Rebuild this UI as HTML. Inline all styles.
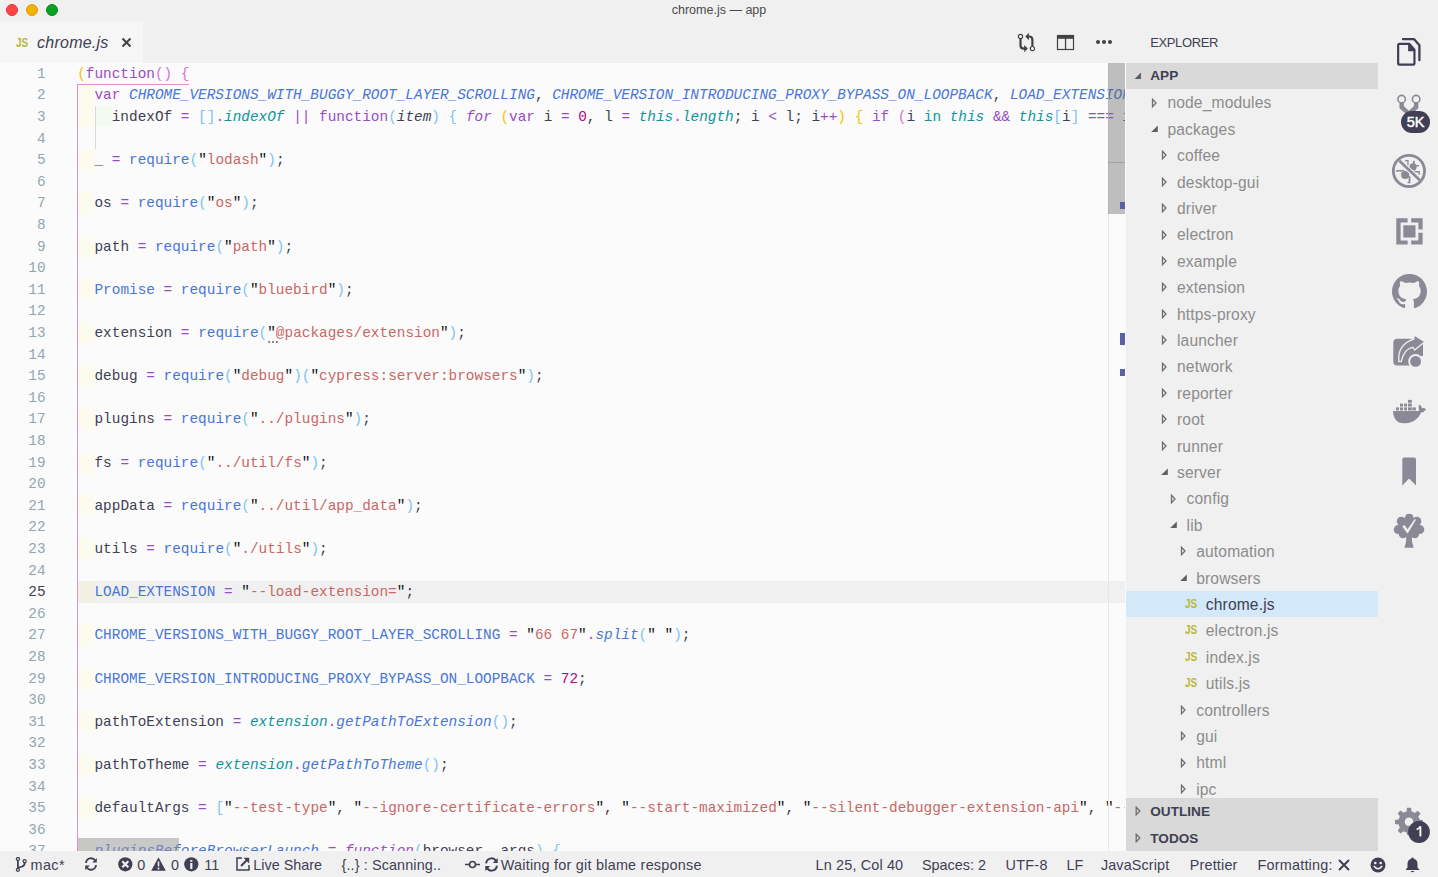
<!DOCTYPE html>
<html><head><meta charset="utf-8">
<style>
*{margin:0;padding:0;box-sizing:border-box}
html,body{width:1438px;height:877px;overflow:hidden;background:#f0f0f0;font-family:"Liberation Sans",sans-serif}
.abs{position:absolute}
#title{position:absolute;left:0;top:0;width:1438px;height:21px;background:#f0f0f0}
.tl{position:absolute;top:4px;width:12px;height:12px;border-radius:50%}
#ttext{position:absolute;left:0;width:1438px;top:3px;text-align:center;font-size:12.5px;color:#4c4c4c;line-height:14px}
#tabs{position:absolute;left:0;top:21px;width:1126px;height:41.7px;background:#f0f0f0}
#tab{position:absolute;left:0;top:0;width:143px;height:41.7px;background:#f6f6f6}
#tabjs{position:absolute;left:15.5px;top:14px;font-size:13px;line-height:15px;font-weight:bold;color:#b7b73b;transform:scaleX(0.77);transform-origin:0 0}
#tabname{position:absolute;left:37px;top:12.5px;font-size:16px;font-style:italic;color:#403f53;letter-spacing:0.25px}
#editor{position:absolute;left:0;top:62.7px;width:1126px;height:788px;background:#fbfbfb;overflow:hidden}
#code{position:absolute;left:0;top:-62.7px;width:1125px;height:877px;overflow:hidden}
.ln{position:absolute;left:0;width:45.6px;text-align:right;font-family:"Liberation Mono",monospace;font-size:14.4px;line-height:21.6px;height:21.6px;color:#90a7b2;padding-top:1px}
.ln.act{color:#403f53}
.cl{position:absolute;left:77.2px;white-space:pre;font-family:"Liberation Mono",monospace;font-size:14.4px;line-height:21.6px;height:21.6px;color:#403f53;padding-top:1px}
.ir1{position:absolute;left:78px;width:15.8px;height:21.6px;background:#fbfbee}
.ir2{position:absolute;left:95px;width:17.3px;height:21.6px;background:#f2fbf2}
.k{color:#994cc3}.ki{color:#994cc3;font-style:italic}
.c{color:#4876d6;font-style:italic}
.f{color:#4876d6}.fi{color:#4876d6;font-style:italic}
.t{color:#0c969b;font-style:italic}.tn{color:#0c969b}
.s{color:#c96765}.q{color:#111111}
.n{color:#aa0982}.o{color:#994cc3}.v{color:#403f53}.vi{color:#403f53;font-style:italic}
.b1{color:#f2c500}.b2{color:#da70d6}.b3{color:#7cc4f2}
#sidebar{position:absolute;left:1126px;top:21px;width:252px;height:830px;background:#f0f0f0;overflow:hidden}
#activity{position:absolute;left:1378px;top:21px;width:60px;height:830px;background:#f0f0f0}
.tr{position:absolute;left:1126px;width:252px;height:26.4px}
.tr.sel{background:#d3e8f8}
.tw{position:absolute;top:8.2px}
.tt{position:absolute;top:5px;font-size:15.6px;line-height:18px;color:#8c8c8c;white-space:nowrap;letter-spacing:0.15px}
.tr.sel .tt{color:#403f53}
.jsi{position:absolute;top:5px;font-size:13px;line-height:15px;font-weight:bold;color:#b7b73b;transform:scaleX(0.77);transform-origin:0 0}
#status{position:absolute;left:0;top:850.7px;width:1438px;height:26.3px;background:#f0f0f0;color:#403f53;font-size:14.4px}
.st{position:absolute;top:6px;white-space:nowrap;line-height:16px}
</style></head><body>
<div id="title">
  <div class="tl" style="left:6px;background:#fd4444;border:0.6px solid #e53535"></div>
  <div class="tl" style="left:26px;background:#f6b000;border:0.6px solid #e0a000"></div>
  <div class="tl" style="left:46px;background:#08a222;border:0.6px solid #06901c"></div>
  <div id="ttext">chrome.js — app</div>
</div>
<div id="tabs">
  <div id="tab">
    <span id="tabjs">JS</span>
    <span id="tabname">chrome.js</span>
    <svg class="abs" style="left:121px;top:16px" width="11" height="11" viewBox="0 0 11 11"><path d="M1.5 1.5 L9.5 9.5 M9.5 1.5 L1.5 9.5" stroke="#424242" stroke-width="2"/></svg>
  </div>
  <!-- editor actions -->
  <svg class="abs" style="left:1016px;top:10px" width="22" height="22" viewBox="0 0 22 22">
    <path d="M4.5 7.6 V14.2 Q4.5 17.6 7.9 17.6 H9" fill="none" stroke="#424242" stroke-width="2.2"/>
    <path d="M8.2 13.9 L11.8 17.6 L8.2 21.3 Z" fill="#424242"/>
    <path d="M16.4 15.5 V8.9 Q16.4 5.5 13 5.5 H11.9" fill="none" stroke="#424242" stroke-width="2.2"/>
    <path d="M12.9 1.8 L9.3 5.5 L12.9 9.2 Z" fill="#424242"/>
    <circle cx="4.5" cy="5.5" r="2.1" fill="#fff" stroke="#424242" stroke-width="1.2"/>
    <circle cx="16.4" cy="17.6" r="2.1" fill="#fff" stroke="#424242" stroke-width="1.2"/>
  </svg>
  <svg class="abs" style="left:1056px;top:13px" width="19" height="17" viewBox="0 0 19 17">
    <rect x="1.5" y="1.5" width="16" height="14" fill="none" stroke="#424242" stroke-width="1.2"/>
    <rect x="1" y="1" width="17" height="3.8" fill="#424242"/>
    <rect x="8.9" y="1" width="1.3" height="15" fill="#424242"/>
  </svg>
  <svg class="abs" style="left:1094px;top:37px;top:16px" width="20" height="10" viewBox="0 0 20 10">
    <circle cx="4" cy="5" r="2" fill="#424242"/><circle cx="10" cy="5" r="2" fill="#424242"/><circle cx="16" cy="5" r="2" fill="#424242"/>
  </svg>
</div>

<div id="editor">
 <div id="code">
<div class="ir1" style="top:84.30px"></div>
<div class="ir1" style="top:105.90px"></div>
<div class="ir1" style="top:149.10px"></div>
<div class="ir1" style="top:192.30px"></div>
<div class="ir1" style="top:235.50px"></div>
<div class="ir1" style="top:278.70px"></div>
<div class="ir1" style="top:321.90px"></div>
<div class="ir1" style="top:365.10px"></div>
<div class="ir1" style="top:408.30px"></div>
<div class="ir1" style="top:451.50px"></div>
<div class="ir1" style="top:494.70px"></div>
<div class="ir1" style="top:537.90px"></div>
<div class="ir1" style="top:581.10px"></div>
<div class="ir1" style="top:624.30px"></div>
<div class="ir1" style="top:667.50px"></div>
<div class="ir1" style="top:710.70px"></div>
<div class="ir1" style="top:753.90px"></div>
<div class="ir1" style="top:797.10px"></div>
<div class="ir1" style="top:840.30px"></div>
<div class="ir2" style="top:105.90px"></div>
  <div class="abs" style="left:78px;top:581.1px;width:1047px;height:21.6px;background:#f0f0f0"></div>
  <div class="abs" style="left:78px;top:581.1px;width:15.8px;height:21.6px;background:#f0f0e3"></div>
  <div class="abs" style="left:94.6px;top:106.3px;width:1px;height:43.2px;background:#d9d9d9"></div>
  <div class="abs" style="left:77px;top:84.3px;width:1.1px;height:800px;background:#dd90da"></div>
  <div class="abs" style="left:77px;top:84px;width:111.5px;height:1.1px;background:#dd90da"></div>
<div class="ln" style="top:62.70px">1</div>
<div class="cl" style="top:62.70px"><span class="b1">(</span><span class="k">function</span><span class="b2">()</span><span class="v"> </span><span class="b2">{</span></div>
<div class="ln" style="top:84.30px">2</div>
<div class="cl" style="top:84.30px"><span class="v">  </span><span class="k">var </span><span class="c">CHROME_VERSIONS_WITH_BUGGY_ROOT_LAYER_SCROLLING</span><span class="v">, </span><span class="c">CHROME_VERSION_INTRODUCING_PROXY_BYPASS_ON_LOOPBACK</span><span class="v">, </span><span class="c">LOAD_EXTENSION</span><span class="v">, </span><span class="c">_, </span></div>
<div class="ln" style="top:105.90px">3</div>
<div class="cl" style="top:105.90px"><span class="v">    indexOf </span><span class="o">=</span><span class="v"> </span><span class="b3">[]</span><span class="o">.</span><span class="t">indexOf</span><span class="v"> </span><span class="o">||</span><span class="v"> </span><span class="k">function</span><span class="b3">(</span><span class="vi">item</span><span class="b3">)</span><span class="v"> </span><span class="b3">{</span><span class="v"> </span><span class="ki">for</span><span class="v"> </span><span class="b1">(</span><span class="k">var</span><span class="v"> i </span><span class="o">=</span><span class="v"> </span><span class="n">0</span><span class="v">, l </span><span class="o">=</span><span class="v"> </span><span class="t">this</span><span class="o">.</span><span class="t">length</span><span class="v">; i </span><span class="o">&lt;</span><span class="v"> l; i</span><span class="o">++</span><span class="b1">)</span><span class="v"> </span><span class="b1">{</span><span class="v"> </span><span class="k">if</span><span class="v"> </span><span class="b2">(</span><span class="v">i </span><span class="tn">in</span><span class="v"> </span><span class="t">this</span><span class="v"> </span><span class="o">&amp;&amp;</span><span class="v"> </span><span class="t">this</span><span class="b3">[</span><span class="v">i</span><span class="b3">]</span><span class="v"> </span><span class="o">===</span><span class="v"> item</span></div>
<div class="ln" style="top:127.50px">4</div>
<div class="ln" style="top:149.10px">5</div>
<div class="cl" style="top:149.10px"><span class="v">  </span><span class="v">_</span><span class="v"> </span><span class="o">=</span><span class="v"> </span><span class="f">require</span><span class="b3">(</span><span class="q">&quot;</span><span class="s">lodash</span><span class="q">&quot;</span><span class="b3">)</span><span class="v">;</span></div>
<div class="ln" style="top:170.70px">6</div>
<div class="ln" style="top:192.30px">7</div>
<div class="cl" style="top:192.30px"><span class="v">  </span><span class="v">os</span><span class="v"> </span><span class="o">=</span><span class="v"> </span><span class="f">require</span><span class="b3">(</span><span class="q">&quot;</span><span class="s">os</span><span class="q">&quot;</span><span class="b3">)</span><span class="v">;</span></div>
<div class="ln" style="top:213.90px">8</div>
<div class="ln" style="top:235.50px">9</div>
<div class="cl" style="top:235.50px"><span class="v">  </span><span class="v">path</span><span class="v"> </span><span class="o">=</span><span class="v"> </span><span class="f">require</span><span class="b3">(</span><span class="q">&quot;</span><span class="s">path</span><span class="q">&quot;</span><span class="b3">)</span><span class="v">;</span></div>
<div class="ln" style="top:257.10px">10</div>
<div class="ln" style="top:278.70px">11</div>
<div class="cl" style="top:278.70px"><span class="v">  </span><span class="f">Promise</span><span class="v"> </span><span class="o">=</span><span class="v"> </span><span class="f">require</span><span class="b3">(</span><span class="q">&quot;</span><span class="s">bluebird</span><span class="q">&quot;</span><span class="b3">)</span><span class="v">;</span></div>
<div class="ln" style="top:300.30px">12</div>
<div class="ln" style="top:321.90px">13</div>
<div class="cl" style="top:321.90px"><span class="v">  </span><span class="v">extension</span><span class="v"> </span><span class="o">=</span><span class="v"> </span><span class="f">require</span><span class="b3">(</span><span class="q">&quot;</span><span class="s">@packages/extension</span><span class="q">&quot;</span><span class="b3">)</span><span class="v">;</span></div>
<div class="ln" style="top:343.50px">14</div>
<div class="ln" style="top:365.10px">15</div>
<div class="cl" style="top:365.10px"><span class="v">  debug </span><span class="o">=</span><span class="v"> </span><span class="f">require</span><span class="b3">(</span><span class="q">&quot;</span><span class="s">debug</span><span class="q">&quot;</span><span class="b3">)(</span><span class="q">&quot;</span><span class="s">cypress:server:browsers</span><span class="q">&quot;</span><span class="b3">)</span><span class="v">;</span></div>
<div class="ln" style="top:386.70px">16</div>
<div class="ln" style="top:408.30px">17</div>
<div class="cl" style="top:408.30px"><span class="v">  </span><span class="v">plugins</span><span class="v"> </span><span class="o">=</span><span class="v"> </span><span class="f">require</span><span class="b3">(</span><span class="q">&quot;</span><span class="s">../plugins</span><span class="q">&quot;</span><span class="b3">)</span><span class="v">;</span></div>
<div class="ln" style="top:429.90px">18</div>
<div class="ln" style="top:451.50px">19</div>
<div class="cl" style="top:451.50px"><span class="v">  </span><span class="v">fs</span><span class="v"> </span><span class="o">=</span><span class="v"> </span><span class="f">require</span><span class="b3">(</span><span class="q">&quot;</span><span class="s">../util/fs</span><span class="q">&quot;</span><span class="b3">)</span><span class="v">;</span></div>
<div class="ln" style="top:473.10px">20</div>
<div class="ln" style="top:494.70px">21</div>
<div class="cl" style="top:494.70px"><span class="v">  </span><span class="v">appData</span><span class="v"> </span><span class="o">=</span><span class="v"> </span><span class="f">require</span><span class="b3">(</span><span class="q">&quot;</span><span class="s">../util/app_data</span><span class="q">&quot;</span><span class="b3">)</span><span class="v">;</span></div>
<div class="ln" style="top:516.30px">22</div>
<div class="ln" style="top:537.90px">23</div>
<div class="cl" style="top:537.90px"><span class="v">  </span><span class="v">utils</span><span class="v"> </span><span class="o">=</span><span class="v"> </span><span class="f">require</span><span class="b3">(</span><span class="q">&quot;</span><span class="s">./utils</span><span class="q">&quot;</span><span class="b3">)</span><span class="v">;</span></div>
<div class="ln" style="top:559.50px">24</div>
<div class="ln act" style="top:581.10px">25</div>
<div class="cl" style="top:581.10px"><span class="v">  </span><span class="f">LOAD_EXTENSION</span><span class="v"> </span><span class="o">=</span><span class="v"> </span><span class="q">&quot;</span><span class="s">--load-extension=</span><span class="q">&quot;</span><span class="v">;</span></div>
<div class="ln" style="top:602.70px">26</div>
<div class="ln" style="top:624.30px">27</div>
<div class="cl" style="top:624.30px"><span class="v">  </span><span class="f">CHROME_VERSIONS_WITH_BUGGY_ROOT_LAYER_SCROLLING</span><span class="v"> </span><span class="o">=</span><span class="v"> </span><span class="q">&quot;</span><span class="s">66 67</span><span class="q">&quot;</span><span class="o">.</span><span class="fi">split</span><span class="b3">(</span><span class="q">&quot; &quot;</span><span class="b3">)</span><span class="v">;</span></div>
<div class="ln" style="top:645.90px">28</div>
<div class="ln" style="top:667.50px">29</div>
<div class="cl" style="top:667.50px"><span class="v">  </span><span class="f">CHROME_VERSION_INTRODUCING_PROXY_BYPASS_ON_LOOPBACK</span><span class="v"> </span><span class="o">=</span><span class="v"> </span><span class="n">72</span><span class="v">;</span></div>
<div class="ln" style="top:689.10px">30</div>
<div class="ln" style="top:710.70px">31</div>
<div class="cl" style="top:710.70px"><span class="v">  pathToExtension </span><span class="o">=</span><span class="v"> </span><span class="t">extension</span><span class="o">.</span><span class="fi">getPathToExtension</span><span class="b3">()</span><span class="v">;</span></div>
<div class="ln" style="top:732.30px">32</div>
<div class="ln" style="top:753.90px">33</div>
<div class="cl" style="top:753.90px"><span class="v">  pathToTheme </span><span class="o">=</span><span class="v"> </span><span class="t">extension</span><span class="o">.</span><span class="fi">getPathToTheme</span><span class="b3">()</span><span class="v">;</span></div>
<div class="ln" style="top:775.50px">34</div>
<div class="ln" style="top:797.10px">35</div>
<div class="cl" style="top:797.10px"><span class="v">  defaultArgs </span><span class="o">=</span><span class="v"> </span><span class="b3">[</span><span class="q">&quot;</span><span class="s">--test-type</span><span class="q">&quot;</span><span class="v">, </span><span class="q">&quot;</span><span class="s">--ignore-certificate-errors</span><span class="q">&quot;</span><span class="v">, </span><span class="q">&quot;</span><span class="s">--start-maximized</span><span class="q">&quot;</span><span class="v">, </span><span class="q">&quot;</span><span class="s">--silent-debugger-extension-api</span><span class="q">&quot;</span><span class="v">, </span><span class="q">&quot;</span><span class="s">--no-default-browser-check</span></div>
<div class="ln" style="top:818.70px">36</div>
<div class="ln" style="top:840.30px">37</div>
<div class="cl" style="top:840.30px"><span class="v">  </span><span class="fi">pluginsBeforeBrowserLaunch</span><span class="v"> </span><span class="o">=</span><span class="v"> </span><span class="ki">function</span><span class="b3">(</span><span class="v">browser, args</span><span class="b3">)</span><span class="v"> </span><span class="b3">{</span></div>
  <div class="abs" style="left:78px;top:838px;width:100.5px;height:14px;background:rgba(150,150,150,0.5)"></div>
  <svg class="abs" style="left:266.5px;top:339.5px" width="14" height="4" viewBox="0 0 14 4"><circle cx="2.2" cy="2" r="1" fill="#666"/><circle cx="6" cy="2" r="1" fill="#666"/><circle cx="9.8" cy="2" r="1" fill="#666"/></svg>
 </div>
 <!-- overview ruler -->
 <div class="abs" style="left:1108px;top:0;width:1px;height:788px;background:#e6e6e6"></div>
 <div class="abs" style="left:1108px;top:0;width:17px;height:151px;background:rgba(100,100,100,0.4)"></div>
 <div class="abs" style="left:1108px;top:99px;width:17px;height:1.5px;background:#9aa3ab"></div>
 <div class="abs" style="left:1119.7px;top:139.5px;width:5.3px;height:7px;background:#5b5fa8"></div>
 <div class="abs" style="left:1119.7px;top:270.7px;width:5.3px;height:11.6px;background:#5b5fa8"></div>
 <div class="abs" style="left:1119.7px;top:305.9px;width:5.3px;height:7.4px;background:#5b5fa8"></div>
</div>

<div id="sidebar">
  <div class="abs" style="left:24.3px;top:14px;font-size:13px;color:#403f53;letter-spacing:-0.4px;line-height:16px">EXPLORER</div>
  <div class="abs" style="left:0;top:42px;width:252px;height:26.4px;background:#d9d9d9"></div>
  <svg class="abs" style="left:8px;top:50.5px" width="8" height="8" viewBox="0 0 8 8"><path d="M7 0.5 V7 H0.5 Z" fill="#5f5f5f"/></svg>
  <div class="abs" style="left:24.3px;top:47px;font-size:13.6px;font-weight:bold;color:#403f53;line-height:16px">APP</div>
  <div class="abs" style="left:0;top:777.3px;width:252px;height:52.7px;background:#d9d9d9"></div>
  <svg class="abs" style="left:9px;top:785px" width="8" height="10" viewBox="0 0 8 10"><path d="M1.2 1.2 L4.9 5 L1.2 8.8 Z" fill="none" stroke="#6f6f6f" stroke-width="1.3"/></svg>
  <div class="abs" style="left:24.3px;top:782.8px;font-size:13.6px;font-weight:bold;color:#403f53;line-height:16px">OUTLINE</div>
  <svg class="abs" style="left:9px;top:812px" width="8" height="10" viewBox="0 0 8 10"><path d="M1.2 1.2 L4.9 5 L1.2 8.8 Z" fill="none" stroke="#6f6f6f" stroke-width="1.3"/></svg>
  <div class="abs" style="left:24.3px;top:809.8px;font-size:13.6px;font-weight:bold;color:#403f53;line-height:16px">TODOS</div>
</div>
<div id="treewrap" style="position:absolute;left:0;top:0;width:1438px;height:798.3px;overflow:hidden">
<div class="tr" style="top:89.40px"><svg class="tw" style="left:25.0px" width="8" height="10" viewBox="0 0 8 10"><path d="M1.5 1.3 L5 5 L1.5 8.7 Z" fill="none" stroke="#6f6f6f" stroke-width="1.3"/></svg><span class="tt" style="left:41.4px">node_modules</span></div>
<div class="tr" style="top:115.80px"><svg class="tw" style="left:25.0px" width="8" height="10" viewBox="0 0 8 10"><path d="M6.8 1.4 L6.8 8 L0.2 8 Z" fill="#606060"/></svg><span class="tt" style="left:41.4px">packages</span></div>
<div class="tr" style="top:142.20px"><svg class="tw" style="left:34.6px" width="8" height="10" viewBox="0 0 8 10"><path d="M1.5 1.3 L5 5 L1.5 8.7 Z" fill="none" stroke="#6f6f6f" stroke-width="1.3"/></svg><span class="tt" style="left:51.0px">coffee</span></div>
<div class="tr" style="top:168.60px"><svg class="tw" style="left:34.6px" width="8" height="10" viewBox="0 0 8 10"><path d="M1.5 1.3 L5 5 L1.5 8.7 Z" fill="none" stroke="#6f6f6f" stroke-width="1.3"/></svg><span class="tt" style="left:51.0px">desktop-gui</span></div>
<div class="tr" style="top:195.00px"><svg class="tw" style="left:34.6px" width="8" height="10" viewBox="0 0 8 10"><path d="M1.5 1.3 L5 5 L1.5 8.7 Z" fill="none" stroke="#6f6f6f" stroke-width="1.3"/></svg><span class="tt" style="left:51.0px">driver</span></div>
<div class="tr" style="top:221.40px"><svg class="tw" style="left:34.6px" width="8" height="10" viewBox="0 0 8 10"><path d="M1.5 1.3 L5 5 L1.5 8.7 Z" fill="none" stroke="#6f6f6f" stroke-width="1.3"/></svg><span class="tt" style="left:51.0px">electron</span></div>
<div class="tr" style="top:247.80px"><svg class="tw" style="left:34.6px" width="8" height="10" viewBox="0 0 8 10"><path d="M1.5 1.3 L5 5 L1.5 8.7 Z" fill="none" stroke="#6f6f6f" stroke-width="1.3"/></svg><span class="tt" style="left:51.0px">example</span></div>
<div class="tr" style="top:274.20px"><svg class="tw" style="left:34.6px" width="8" height="10" viewBox="0 0 8 10"><path d="M1.5 1.3 L5 5 L1.5 8.7 Z" fill="none" stroke="#6f6f6f" stroke-width="1.3"/></svg><span class="tt" style="left:51.0px">extension</span></div>
<div class="tr" style="top:300.60px"><svg class="tw" style="left:34.6px" width="8" height="10" viewBox="0 0 8 10"><path d="M1.5 1.3 L5 5 L1.5 8.7 Z" fill="none" stroke="#6f6f6f" stroke-width="1.3"/></svg><span class="tt" style="left:51.0px">https-proxy</span></div>
<div class="tr" style="top:327.00px"><svg class="tw" style="left:34.6px" width="8" height="10" viewBox="0 0 8 10"><path d="M1.5 1.3 L5 5 L1.5 8.7 Z" fill="none" stroke="#6f6f6f" stroke-width="1.3"/></svg><span class="tt" style="left:51.0px">launcher</span></div>
<div class="tr" style="top:353.40px"><svg class="tw" style="left:34.6px" width="8" height="10" viewBox="0 0 8 10"><path d="M1.5 1.3 L5 5 L1.5 8.7 Z" fill="none" stroke="#6f6f6f" stroke-width="1.3"/></svg><span class="tt" style="left:51.0px">network</span></div>
<div class="tr" style="top:379.80px"><svg class="tw" style="left:34.6px" width="8" height="10" viewBox="0 0 8 10"><path d="M1.5 1.3 L5 5 L1.5 8.7 Z" fill="none" stroke="#6f6f6f" stroke-width="1.3"/></svg><span class="tt" style="left:51.0px">reporter</span></div>
<div class="tr" style="top:406.20px"><svg class="tw" style="left:34.6px" width="8" height="10" viewBox="0 0 8 10"><path d="M1.5 1.3 L5 5 L1.5 8.7 Z" fill="none" stroke="#6f6f6f" stroke-width="1.3"/></svg><span class="tt" style="left:51.0px">root</span></div>
<div class="tr" style="top:432.60px"><svg class="tw" style="left:34.6px" width="8" height="10" viewBox="0 0 8 10"><path d="M1.5 1.3 L5 5 L1.5 8.7 Z" fill="none" stroke="#6f6f6f" stroke-width="1.3"/></svg><span class="tt" style="left:51.0px">runner</span></div>
<div class="tr" style="top:459.00px"><svg class="tw" style="left:34.6px" width="8" height="10" viewBox="0 0 8 10"><path d="M6.8 1.4 L6.8 8 L0.2 8 Z" fill="#606060"/></svg><span class="tt" style="left:51.0px">server</span></div>
<div class="tr" style="top:485.40px"><svg class="tw" style="left:44.2px" width="8" height="10" viewBox="0 0 8 10"><path d="M1.5 1.3 L5 5 L1.5 8.7 Z" fill="none" stroke="#6f6f6f" stroke-width="1.3"/></svg><span class="tt" style="left:60.6px">config</span></div>
<div class="tr" style="top:511.80px"><svg class="tw" style="left:44.2px" width="8" height="10" viewBox="0 0 8 10"><path d="M6.8 1.4 L6.8 8 L0.2 8 Z" fill="#606060"/></svg><span class="tt" style="left:60.6px">lib</span></div>
<div class="tr" style="top:538.20px"><svg class="tw" style="left:53.8px" width="8" height="10" viewBox="0 0 8 10"><path d="M1.5 1.3 L5 5 L1.5 8.7 Z" fill="none" stroke="#6f6f6f" stroke-width="1.3"/></svg><span class="tt" style="left:70.2px">automation</span></div>
<div class="tr" style="top:564.60px"><svg class="tw" style="left:53.8px" width="8" height="10" viewBox="0 0 8 10"><path d="M6.8 1.4 L6.8 8 L0.2 8 Z" fill="#606060"/></svg><span class="tt" style="left:70.2px">browsers</span></div>
<div class="tr sel" style="top:591.00px"><span class="jsi" style="left:58.5px">JS</span><span class="tt" style="left:79.8px">chrome.js</span></div>
<div class="tr" style="top:617.40px"><span class="jsi" style="left:58.5px">JS</span><span class="tt" style="left:79.8px">electron.js</span></div>
<div class="tr" style="top:643.80px"><span class="jsi" style="left:58.5px">JS</span><span class="tt" style="left:79.8px">index.js</span></div>
<div class="tr" style="top:670.20px"><span class="jsi" style="left:58.5px">JS</span><span class="tt" style="left:79.8px">utils.js</span></div>
<div class="tr" style="top:696.60px"><svg class="tw" style="left:53.8px" width="8" height="10" viewBox="0 0 8 10"><path d="M1.5 1.3 L5 5 L1.5 8.7 Z" fill="none" stroke="#6f6f6f" stroke-width="1.3"/></svg><span class="tt" style="left:70.2px">controllers</span></div>
<div class="tr" style="top:723.00px"><svg class="tw" style="left:53.8px" width="8" height="10" viewBox="0 0 8 10"><path d="M1.5 1.3 L5 5 L1.5 8.7 Z" fill="none" stroke="#6f6f6f" stroke-width="1.3"/></svg><span class="tt" style="left:70.2px">gui</span></div>
<div class="tr" style="top:749.40px"><svg class="tw" style="left:53.8px" width="8" height="10" viewBox="0 0 8 10"><path d="M1.5 1.3 L5 5 L1.5 8.7 Z" fill="none" stroke="#6f6f6f" stroke-width="1.3"/></svg><span class="tt" style="left:70.2px">html</span></div>
<div class="tr" style="top:775.80px"><svg class="tw" style="left:53.8px" width="8" height="10" viewBox="0 0 8 10"><path d="M1.5 1.3 L5 5 L1.5 8.7 Z" fill="none" stroke="#6f6f6f" stroke-width="1.3"/></svg><span class="tt" style="left:70.2px">ipc</span></div>
</div>

<div id="activity">
  <!-- files -->
  <svg class="abs" style="left:17px;top:14.5px" width="27" height="31" viewBox="0 0 27 31">
    <path d="M8 3.2 H19.2 L24.4 9.2 V24" fill="none" stroke="#f0f0f0" stroke-width="4.2" stroke-linejoin="round"/>
    <path d="M8 3.2 H19.2 L24.4 9.2 V24.2" fill="none" stroke="#403f53" stroke-width="2.3" stroke-linejoin="round" stroke-linecap="round"/>
    <path d="M4.4 7.85 H14.2 L19.45 13.8 V27.4 Q19.45 28.65 18.2 28.65 H4.4 Q3.15 28.65 3.15 27.4 V9.1 Q3.15 7.85 4.4 7.85 Z" fill="#f0f0f0" stroke="#f0f0f0" stroke-width="3.6" stroke-linejoin="round"/>
    <path d="M4.4 7.85 H14.2 L19.45 13.8 V27.4 Q19.45 28.65 18.2 28.65 H4.4 Q3.15 28.65 3.15 27.4 V9.1 Q3.15 7.85 4.4 7.85 Z" fill="none" stroke="#403f53" stroke-width="2.2" stroke-linejoin="round"/>
    <path d="M13.1 7.85 H14.2 L19.45 13.8 V15.2 H13.1 Z" fill="#403f53"/>
  </svg>
  <!-- scm -->
  <svg class="abs" style="left:19px;top:69.5px" width="24" height="24" viewBox="0 0 24 24">
    <path d="M4.65 11.5 V16.2 L11 21.8 M19.1 11.5 V16.2 L12.8 21.8" fill="none" stroke="#8a8996" stroke-width="4.4"/>
    <circle cx="4.65" cy="8.15" r="3.75" fill="#f0f0f0" stroke="#8a8996" stroke-width="1.6"/>
    <circle cx="19.1" cy="8.15" r="3.75" fill="#f0f0f0" stroke="#8a8996" stroke-width="1.6"/>
  </svg>
  <div class="abs" style="left:23px;top:90px;width:29px;height:22px;border-radius:11px;background:#403f53;color:#fff;font-size:14.5px;line-height:22px;text-align:center;letter-spacing:-0.1px;-webkit-text-stroke:0.45px #fff">5K</div>
  <!-- debug -->
  <svg class="abs" style="left:12px;top:131px" width="38" height="38" viewBox="0 0 38 38">
    <g fill="#8a8996">
      <circle cx="15.2" cy="23" r="4.1"/>
      <circle cx="23" cy="14.9" r="3.6"/>
      <path d="M15 8 H18.6 V13 H17.3 V9.2 H15 Z"/>
      <rect x="23" y="8.9" width="1.7" height="4.5"/>
      <rect x="25.3" y="13" width="3.5" height="1.5"/>
      <path d="M24.3 19 H29.9 V22.7 H28.5 V20.6 H24.3 Z"/>
      <path d="M6.3 18 H14.3 V19.4 H7.6 V20 H6.3 Z"/>
      <path d="M18.6 24.3 H20.4 V31.2 H17.6 V30.1 H18.6 Z"/>
    </g>
    <path d="M9.3 8.7 L29.9 28.2" stroke="#f0f0f0" stroke-width="5"/>
    <path d="M9.3 8.7 L29.9 28.2" stroke="#8a8996" stroke-width="2.7"/>
    <circle cx="18.95" cy="18.9" r="15.6" fill="none" stroke="#8a8996" stroke-width="2.8"/>
  </svg>
  <!-- remote -->
  <svg class="abs" style="left:17.8px;top:196.8px" width="27" height="27" viewBox="0 0 27 27">
    <path d="M0.3 0.3 H11.6 V4.6 H4.6 V22.4 H11.6 V26.6 H0.3 Z" fill="#8a8996"/>
    <path d="M15.2 0.3 H26.6 V11.6 H22.4 V4.6 H15.2 Z M15.2 26.6 H26.6 V14.8 H22.4 V22.4 H15.2 Z" fill="#8a8996"/>
    <rect x="7.3" y="7.3" width="12.2" height="12.2" fill="#8a8996"/>
  </svg>
  <!-- github -->
  <svg class="abs" style="left:14px;top:253px" width="35" height="35" viewBox="0 0 16 16">
    <path fill="#8a8996" d="M8 0C3.58 0 0 3.58 0 8c0 3.54 2.29 6.53 5.47 7.59.4.07.55-.17.55-.38 0-.19-.01-.82-.01-1.49-2.010.37-2.53-.49-2.69-.94-.09-.23-.48-.94-.82-1.13-.28-.15-.68-.52-.01-.53.63-.01 1.08.58 1.23.82.72 1.21 1.87.87 2.33.66.07-.52.28-.87.51-1.07-1.78-.2-3.64-.89-3.64-3.95 0-.87.31-1.59.82-2.15-.08-.2-.36-1.020.08-2.12 0 0 .67-.21 2.2.82.64-.18 1.32-.27 2-.27.68 0 1.36.09 2 .27 1.53-1.04 2.2-.82 2.2-.82.44 1.1.16 1.92.08 2.12.51.56.82 1.27.82 2.15 0 3.07-1.87 3.75-3.65 3.95.29.25.54.73.54 1.48 0 1.07-.01 1.93-.01 2.2 0 .21.15.46.55.38A8.013 8.013 0 0016 8c0-4.42-3.58-8-8-8z"/>
  </svg>
  <!-- live share -->
  <svg class="abs" style="left:12px;top:307px" width="40" height="44" viewBox="0 0 40 44">
    <path d="M7.3 10.8 H21 L33 14 V28 H21 V37.6 H7.3 Q3.3 37.6 3.3 33.6 V14.8 Q3.3 10.8 7.3 10.8 Z" fill="#8a8996"/>
    <path d="M8.8 33.5 C8 24 12 15 23.8 11.2 L24.1 7 L34.9 13.8 L24.6 22 L23 19.3 C17 20 12.5 26 11.3 33.5 Z" fill="#8a8996" stroke="#f0f0f0" stroke-width="1.3" stroke-linejoin="round"/>
    <circle cx="25.6" cy="33.4" r="7.4" fill="#f0f0f0"/>
    <circle cx="25.6" cy="33.4" r="5.4" fill="#8a8996"/>
  </svg>
  <!-- docker -->
  <svg class="abs" style="left:12px;top:374px" width="40" height="33" viewBox="0 0 40 33">
    <g fill="#8a8996">
      <rect x="18" y="4.9" width="3.8" height="2.9"/>
      <rect x="10" y="8.6" width="3" height="2.9"/><rect x="14.1" y="8.6" width="2.9" height="2.9"/><rect x="18" y="8.6" width="3.8" height="2.9"/>
      <rect x="6" y="12.4" width="2.9" height="3"/><rect x="10" y="12.4" width="3" height="3"/><rect x="14.1" y="12.4" width="2.9" height="3"/><rect x="18" y="12.4" width="3.8" height="3"/><rect x="22.4" y="12.4" width="3.4" height="3"/>
      <path d="M3 16 H29 Q27.8 12 29.3 9.4 Q31.6 10.6 31.9 13.2 Q34.6 12.6 35.9 14.4 Q34.2 17.2 31.4 17.3 Q26.5 28.3 13.8 28.3 Q3.5 28 3 16 Z"/>
    </g>
  </svg>
  <!-- bookmark -->
  <svg class="abs" style="left:24px;top:435.5px" width="15" height="29" viewBox="0 0 15 29">
    <path d="M0.3 2.5 Q0.3 0.5 2.3 0.5 H12 Q14 0.5 14 2.5 V28.5 L7.15 21.6 L0.3 28.5 Z" fill="#8a8996"/>
  </svg>
  <!-- tree -->
  <svg class="abs" style="left:12px;top:489px" width="40" height="42" viewBox="0 0 40 42">
    <g fill="#8a8996">
      <circle cx="19.2" cy="7.9" r="4.1"/><circle cx="11.3" cy="11.3" r="4.5"/><circle cx="26.8" cy="11.3" r="4.5"/>
      <circle cx="8.2" cy="19.6" r="4.5"/><circle cx="29.8" cy="19.6" r="4.5"/>
      <circle cx="12.9" cy="24" r="4.2"/><circle cx="24.9" cy="24" r="4.2"/>
      <circle cx="19.2" cy="17.4" r="10.5"/>
      <path d="M16.4 26 H21.8 Q21.6 33 23.6 37.8 H14.4 Q16.6 33 16.4 26 Z"/>
    </g>
    <path d="M12.7 16.4 L17.5 23.2 L25.6 9.7 L24.8 9.6 L17.4 19.9 L14.5 15.5 Z" fill="#f0f0f0" stroke="#f0f0f0" stroke-width="0.7" stroke-linejoin="round"/>
  </svg>
  <!-- gear -->
  <svg class="abs" style="left:17px;top:786px" width="28" height="28" viewBox="0 0 28 28">
    <path fill="#8a8996" fill-rule="evenodd" d="M12 0.8 H16 L16.6 4.6 Q18.3 5.1 19.7 6 L22.8 3.7 L25.6 6.5 L23.3 9.6 Q24.1 11 24.6 12.6 L28 13.2 V17.1 L24.4 17.7 Q23.9 19.3 23.1 20.7 L25.3 23.8 L22.5 26.6 L19.4 24.4 Q18 25.2 16.4 25.6 L15.8 28 H12.2 L11.6 25.6 Q10 25.1 8.6 24.3 L5.5 26.5 L2.7 23.7 L4.9 20.6 Q4.1 19.2 3.6 17.6 L0 17 V13 L3.6 12.4 Q4.1 10.8 4.9 9.4 L2.7 6.3 L5.5 3.5 L8.6 5.7 Q10 4.9 11.6 4.4 Z M14 10.5 A4.3 4.3 0 1 0 14 19.1 A4.3 4.3 0 1 0 14 10.5 Z"/>
  </svg>
  <svg class="abs" style="left:30px;top:800px" width="22" height="22" viewBox="0 0 22 22"><circle cx="11" cy="11" r="10.9" fill="#403f53"/><path d="M12.4 5.3 V15.4" stroke="#fff" stroke-width="1.9"/><path d="M8.6 8.4 Q11.5 7.3 12.4 5.4" fill="none" stroke="#fff" stroke-width="1.6"/></svg>
</div>

<div id="status">
  <svg class="abs" style="left:15px;top:6.5px" width="12" height="15" viewBox="0 0 12 15">
    <circle cx="2.9" cy="1.9" r="1.5" fill="none" stroke="#403f53" stroke-width="1.3"/>
    <circle cx="2.9" cy="12.8" r="1.5" fill="none" stroke="#403f53" stroke-width="1.3"/>
    <circle cx="9.6" cy="4.2" r="1.5" fill="none" stroke="#403f53" stroke-width="1.3"/>
    <path d="M2.9 3.4 V11.3 M9.6 5.7 V6.5 Q9.6 9 5.5 10 Q2.9 10.6 2.9 11.3" fill="none" stroke="#403f53" stroke-width="1.8"/>
  </svg>
  <span class="st" style="left:30.5px;letter-spacing:0.4px">mac*</span>
  <svg class="abs" style="left:84px;top:6.5px" width="14" height="14" viewBox="0 0 14 14">
    <path d="M2 6 A5 5 0 0 1 11.2 3.6 M12 8 A5 5 0 0 1 2.8 10.4" fill="none" stroke="#403f53" stroke-width="1.8"/>
    <path d="M12.8 1 V5.6 H8.2 Z M1.2 13 V8.4 H5.8 Z" fill="#403f53"/>
  </svg>
  <svg class="abs" style="left:117.5px;top:6.6px" width="15" height="15" viewBox="0 0 15 15">
    <circle cx="7.3" cy="7.3" r="7.1" fill="#403f53"/>
    <path d="M4.3 4.3 L10.3 10.3 M10.3 4.3 L4.3 10.3" stroke="#f0f0f0" stroke-width="2.2"/>
  </svg>
  <span class="st" style="left:137.3px">0</span>
  <svg class="abs" style="left:150.5px;top:6.3px" width="15" height="14" viewBox="0 0 15 14">
    <path d="M7.5 0.3 L14.8 13.7 H0.2 Z" fill="#403f53"/>
    <path d="M7.5 4.5 V9.3 M7.5 10.6 V12.4" stroke="#f0f0f0" stroke-width="1.6"/>
  </svg>
  <span class="st" style="left:171px">0</span>
  <svg class="abs" style="left:184.3px;top:6.6px" width="15" height="15" viewBox="0 0 15 15">
    <circle cx="7.3" cy="7.3" r="7.1" fill="#403f53"/>
    <path d="M7.3 6 V12 M7.3 3 V4.8" stroke="#f0f0f0" stroke-width="2.2"/>
  </svg>
  <span class="st" style="left:204.3px">11</span>
  <svg class="abs" style="left:236px;top:6.5px" width="14" height="14" viewBox="0 0 14 14">
    <path d="M6 1 H1 V13 H13 V8" fill="none" stroke="#403f53" stroke-width="1.5"/>
    <path d="M5 9 L11.5 2.5" stroke="#403f53" stroke-width="2"/>
    <path d="M7.5 0.8 H13.2 V6.5 Z" fill="#403f53"/>
  </svg>
  <span class="st" style="left:253.3px">Live Share</span>
  <span class="st" style="left:341.5px;letter-spacing:0.12px">{..} : Scanning..</span>
  <svg class="abs" style="left:465px;top:9px" width="15" height="9" viewBox="0 0 15 9">
    <circle cx="7.5" cy="4.5" r="3" fill="none" stroke="#403f53" stroke-width="1.6"/>
    <path d="M0 4.5 H4.5 M10.5 4.5 H15" stroke="#403f53" stroke-width="1.6"/>
  </svg>
  <svg class="abs" style="left:483.5px;top:6px" width="15" height="15" viewBox="0 0 14 14">
    <path d="M2 6 A5 5 0 0 1 11.2 3.6 M12 8 A5 5 0 0 1 2.8 10.4" fill="none" stroke="#403f53" stroke-width="1.8"/>
    <path d="M12.8 1 V5.6 H8.2 Z M1.2 13 V8.4 H5.8 Z" fill="#403f53"/>
  </svg>
  <span class="st" style="left:500.7px;letter-spacing:0.24px">Waiting for git blame response</span>
  <span class="st" style="left:815.6px;letter-spacing:0.16px">Ln 25, Col 40</span>
  <span class="st" style="left:922px">Spaces: 2</span>
  <span class="st" style="left:1005.5px;letter-spacing:0.28px">UTF-8</span>
  <span class="st" style="left:1066.5px">LF</span>
  <span class="st" style="left:1100.9px;letter-spacing:0.13px">JavaScript</span>
  <span class="st" style="left:1189.7px;letter-spacing:0.19px">Prettier</span>
  <span class="st" style="left:1257.5px;letter-spacing:0.22px">Formatting:</span>
  <svg class="abs" style="left:1337.5px;top:8px" width="12" height="12" viewBox="0 0 12 12">
    <path d="M1 1 L11 11 M11 1 L1 11" stroke="#403f53" stroke-width="2"/>
  </svg>
  <svg class="abs" style="left:1370px;top:6px" width="16" height="16" viewBox="0 0 16 16">
    <circle cx="8" cy="8" r="7.5" fill="#403f53"/>
    <circle cx="5.3" cy="6" r="1.3" fill="#f0f0f0"/><circle cx="10.7" cy="6" r="1.3" fill="#f0f0f0"/>
    <path d="M3.8 9 Q8 14.5 12.2 9" fill="none" stroke="#f0f0f0" stroke-width="1.6"/>
  </svg>
  <svg class="abs" style="left:1404.5px;top:6px" width="15" height="16" viewBox="0 0 15 16">
    <path d="M7.5 0.5 Q8.7 0.5 8.8 1.8 Q12.5 2.8 12.5 7 V10.5 L14.5 13 H0.5 L2.5 10.5 V7 Q2.5 2.8 6.2 1.8 Q6.3 0.5 7.5 0.5 Z" fill="#403f53"/>
    <path d="M5.5 14 Q7.5 16.5 9.5 14 Z" fill="#403f53"/>
  </svg>
</div>
</body></html>
